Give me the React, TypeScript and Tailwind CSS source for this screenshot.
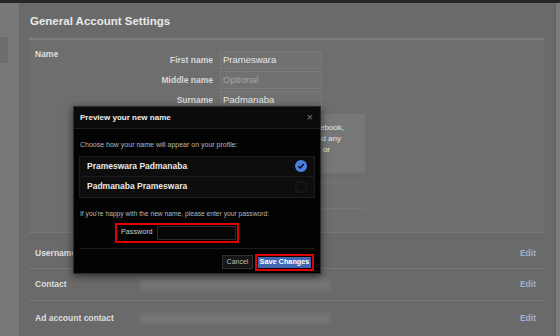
import React from "react";

const font = { fontFamily: '"Liberation Sans", Arial, sans-serif' };

function Field({ label, value, placeholder }: { label: string; value?: string; placeholder?: string }) {
  return (
    <div className="flex items-center h-[20px]">
      <div className="w-[155px] text-right pr-[7px] text-[8.5px] font-bold text-[#d6d6d6]">{label}</div>
      <div className="w-[102px] h-[18px] bg-[#717171] border border-[#797979] flex items-center pl-[2px] text-[9.5px]">
        {value ? <span className="text-[#e6e6e6]">{value}</span> : <span className="text-[#a6a6a6]">{placeholder}</span>}
      </div>
    </div>
  );
}

function Row({ label, blur, h, pt }: { label: string; blur?: boolean; h: string; pt?: string }) {
  return (
    <div className={`flex items-center border-t border-[#777777] ${h} ${pt ?? ""}`}>
      <div className="w-[111px] pl-[6px] text-[8.5px] font-bold text-[#dedede] whitespace-nowrap">{label}</div>
      {blur ? <div className="w-[190px] h-[11px] bg-[#767676] blur-[2px]" /> : <div className="w-[190px]" />}
      <div className="flex-1" />
      <div className="pr-[8px] text-[8.5px] font-bold text-[#9fb0d2]">Edit</div>
    </div>
  );
}

export default function App() {
  return (
    <div style={font} className="w-[560px] h-[336px] relative overflow-hidden bg-[#6a6a6a] flex flex-col">
      <div className="h-[3px] bg-[#262626]" />
      <div className="flex flex-1">
        <div className="w-[19px] bg-[#787878] pt-[34px]">
          <div className="w-[8px] h-[26px] bg-[#6d6d6d]" />
        </div>
        <div className="w-[535px] flex flex-col pl-[10px]">
          <div className="h-[35px] flex items-center pl-[1px] pt-[3px] text-[11.5px] font-bold text-[#e8e8e8]">General Account Settings</div>
          <div className="w-[515px] h-[2px] bg-[#7e7e7e]" />
          <div className="w-[515px] bg-[#6e6e6e] h-[192px] flex">
            <div className="w-[36px] pl-[6px] pt-[8px] text-[8.5px] font-bold text-[#dedede]">Name</div>
            <div className="flex flex-col">
              <div className="flex flex-col pt-[10px]">
                <Field label="First name" value="Prameswara" />
                <Field label="Middle name" placeholder="Optional" />
                <Field label="Surname" value="Padmanaba" />
              </div>
              <div className="ml-[185px] mt-[4px] w-[115px] h-[59px] bg-[#777777] overflow-hidden pt-[8px] text-[8px] leading-[11px] text-[#e8e8e8]">
                <div className="text-right pr-[21px] whitespace-nowrap">appear on Facebook,</div>
                <div className="text-right pr-[24px] whitespace-nowrap">recently and any</div>
                <div className="text-right pr-[35px] whitespace-nowrap">60 days or</div>
              </div>
              <div className="ml-[185px] mt-[9px] w-[115px] h-[1px] bg-[#767676]" />
              <div className="ml-[185px] mt-[25px] w-[115px] h-[1px] bg-[#767676]" />
            </div>
          </div>
          <div className="w-[515px] flex flex-col">
            <Row label="Username" h="h-[36px]" pt="pt-[5px]" />
            <Row label="Contact" blur h="h-[32px]" />
            <Row label="Ad account contact" blur h="h-[35px]" />
          </div>
        </div>
        <div className="w-[2px] bg-[#646464]" />
        <div className="flex-1 bg-[#7c7c7c]" />
      </div>

      {/* Modal */}
      <div className="absolute left-[73px] top-[106px] w-[248px] h-[168px] bg-[#030303] border border-[#2b2b2b] shadow-[0_2px_8px_rgba(0,0,0,0.6)] flex flex-col">
        <div className="h-[22px] flex items-center justify-between px-[6px] bg-[#0b0b0b] border-b border-[#1e1e1e]">
          <span className="text-[8px] font-bold text-[#eeeeee]">Preview your new name</span>
          <span className="text-[11px] text-[#7a7a7a] leading-none pr-[1px]">×</span>
        </div>
        <div className="flex flex-col px-[6px]">
          <div className="mt-[11px] text-[7px] text-[#b8b8b8] whitespace-nowrap">Choose how your name will appear on your profile:</div>
          <div className="mt-[5px] ml-[-1px] w-[236px] h-[42px] bg-[#0d0d0d] border border-[#1c1c1c] flex flex-col">
            <div className="flex-1 flex items-center justify-between px-[7px] border-b border-[#1c1c1c]">
              <span className="text-[8.5px] font-bold text-[#e8e8e8]">Prameswara Padmanaba</span>
              <span className="w-[12px] h-[12px] rounded-full bg-[#4b7fe3] flex items-center justify-center">
                <svg width="8" height="8" viewBox="0 0 8 8">
                  <path d="M1.3 4.2 L3.2 6 L6.8 2" stroke="#0a0a0a" strokeWidth="1.5" fill="none" />
                </svg>
              </span>
            </div>
            <div className="flex-1 flex items-center justify-between px-[7px]">
              <span className="text-[8.5px] font-bold text-[#e8e8e8]">Padmanaba Prameswara</span>
              <span className="w-[12px] h-[12px] rounded-full border border-[#1f1f1f]" />
            </div>
          </div>
          <div className="mt-[11px] text-[6.7px] text-[#b8b8b8] whitespace-nowrap">If you're happy with the new name, please enter your password:</div>
          <div className="mt-[4px] ml-[35px] w-[124px] h-[20px] border-2 border-[#e00000] flex items-center pl-[4px] gap-[4px]">
            <span className="text-[7.2px] text-[#cfcfcf]">Password</span>
            <div className="w-[79px] h-[14px] bg-[#060606] border border-[#2c2c2c]" />
          </div>
          <div className="mt-[5px] h-[1px] bg-[#1e1e1e]" />
          <div className="mt-[5px] flex justify-end items-center gap-[2px]">
            <div className="w-[31px] h-[14px] bg-[#151515] border border-[#303030] flex items-center justify-center text-[7px] text-[#bdbdbd]">Cancel</div>
            <div className="w-[59px] h-[17px] border-2 border-[#e00000] flex items-center justify-center p-[1px]">
              <div className="w-full h-full bg-[#4267b2] flex items-center justify-center text-[7.3px] font-bold text-white whitespace-nowrap">Save Changes</div>
            </div>
          </div>
        </div>
      </div>
    </div>
  );
}
